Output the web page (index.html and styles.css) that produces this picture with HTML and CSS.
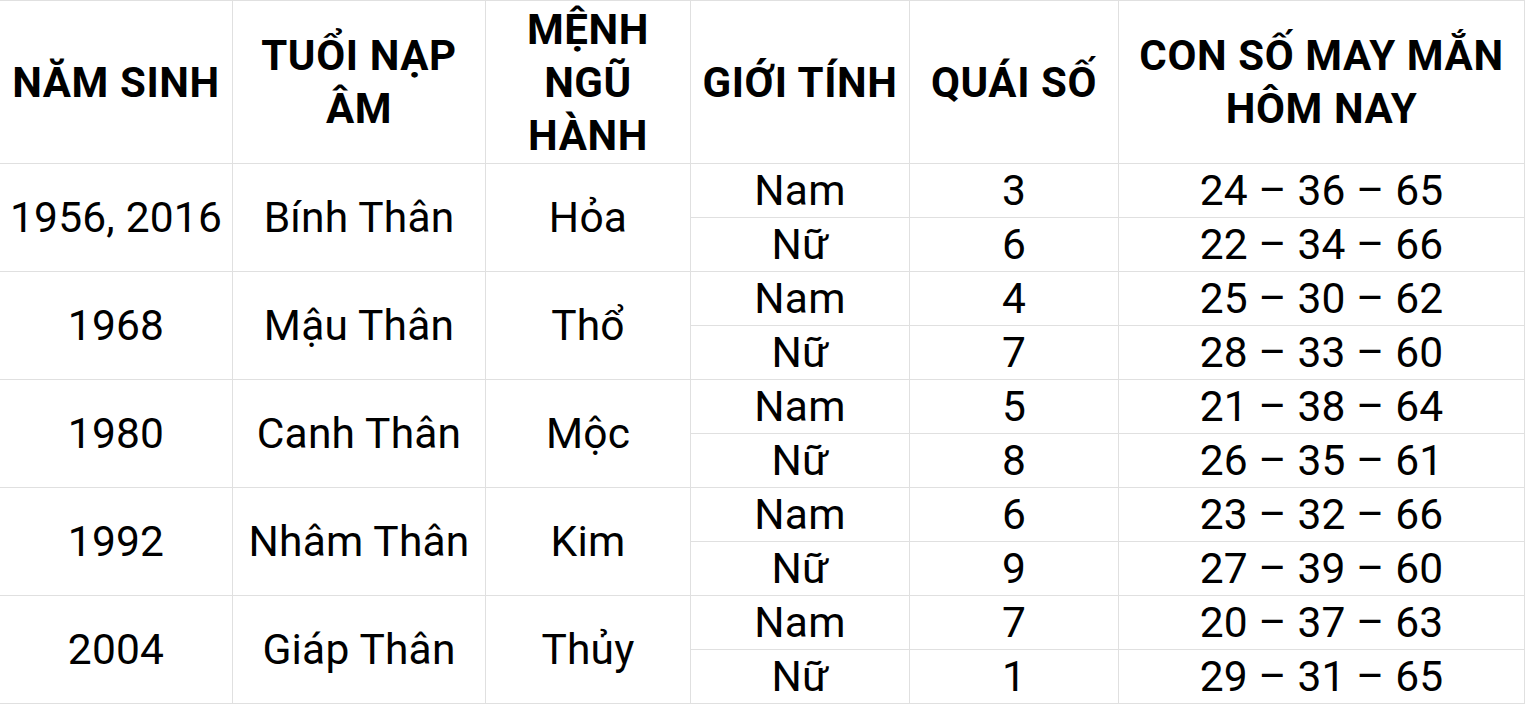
FILE: index.html
```html
<!DOCTYPE html>
<html lang="vi">
<head>
<meta charset="utf-8">
<title>Con số may mắn</title>
<link rel="stylesheet" href="styles.css">
</head>
<body>
<div class="table">
  <div class="cell head">NĂM SINH</div>
  <div class="cell head">TUỔI NẠP ÂM</div>
  <div class="cell head narrow">MỆNH NGŨ HÀNH</div>
  <div class="cell head">GIỚI TÍNH</div>
  <div class="cell head">QUÁI SỐ</div>
  <div class="cell head">CON SỐ MAY MẮN HÔM NAY</div>

  <div class="cell span">1956, 2016</div>
  <div class="cell span">Bính Thân</div>
  <div class="cell span">Hỏa</div>
  <div class="cell">Nam</div><div class="cell">3</div><div class="cell">24 – 36 – 65</div>
  <div class="cell">Nữ</div><div class="cell">6</div><div class="cell">22 – 34 – 66</div>

  <div class="cell span">1968</div>
  <div class="cell span">Mậu Thân</div>
  <div class="cell span">Thổ</div>
  <div class="cell">Nam</div><div class="cell">4</div><div class="cell">25 – 30 – 62</div>
  <div class="cell">Nữ</div><div class="cell">7</div><div class="cell">28 – 33 – 60</div>

  <div class="cell span">1980</div>
  <div class="cell span">Canh Thân</div>
  <div class="cell span">Mộc</div>
  <div class="cell">Nam</div><div class="cell">5</div><div class="cell">21 – 38 – 64</div>
  <div class="cell">Nữ</div><div class="cell">8</div><div class="cell">26 – 35 – 61</div>

  <div class="cell span">1992</div>
  <div class="cell span">Nhâm Thân</div>
  <div class="cell span">Kim</div>
  <div class="cell">Nam</div><div class="cell">6</div><div class="cell">23 – 32 – 66</div>
  <div class="cell">Nữ</div><div class="cell">9</div><div class="cell">27 – 39 – 60</div>

  <div class="cell span">2004</div>
  <div class="cell span">Giáp Thân</div>
  <div class="cell span">Thủy</div>
  <div class="cell">Nam</div><div class="cell">7</div><div class="cell">20 – 37 – 63</div>
  <div class="cell">Nữ</div><div class="cell">1</div><div class="cell">29 – 31 – 65</div>
</div>
</body>
</html>
```
FILE: styles.css
```css
html, body {
  margin: 0;
  padding: 0;
  background: #ffffff;
}
.table {
  display: grid;
  grid-template-columns: 232px 252px 204px 218px 208px 405px;
  grid-template-rows: 162px repeat(10, 53px);
  gap: 1px;
  padding: 1px 1px 1px 0;
  width: 1525px;
  box-sizing: border-box;
  background: #e0e0e0;
  font-family: Roboto, "Noto Sans", sans-serif;
  color: #000;
}
.cell {
  background: #fff;
  display: flex;
  align-items: center;
  justify-content: center;
  text-align: center;
  font-size: 42.5px;
  line-height: 53px;
  letter-spacing: 0.2px;
}
.head {
  font-weight: 700;
  font-size: 42px;
  letter-spacing: 0.6px;
  padding: 0 4px;
}
.narrow {
  padding: 0 40px;
}
.span {
  grid-row: span 2;
}
```
